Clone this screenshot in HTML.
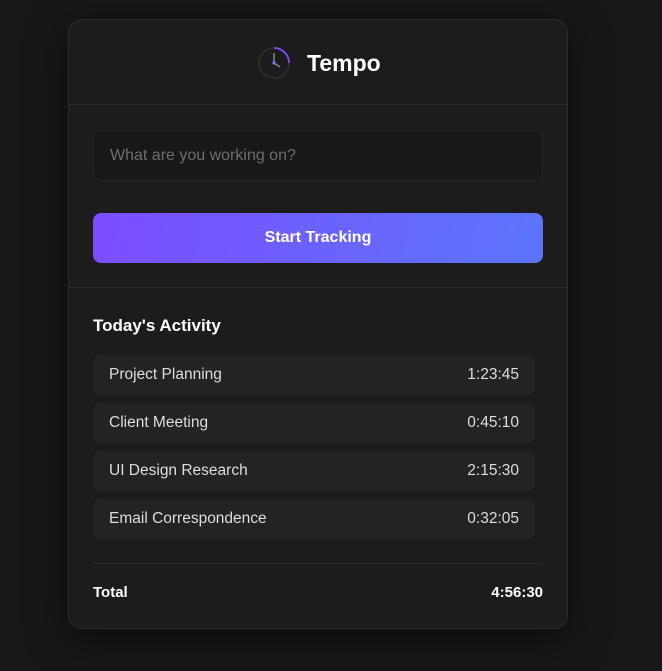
<!DOCTYPE html>
<html><head><style>
*{box-sizing:border-box;margin:0;padding:0}
body{width:662px;height:671px;background:#171717;font-family:"Liberation Sans",sans-serif;position:relative;overflow:hidden}
.card{position:absolute;left:68px;top:19px;width:500px;height:610px;background:#1c1c1c;border:1px solid #2c2c2c;border-radius:14px;box-shadow:0 10px 40px rgba(0,0,0,.5)}
.hdr{height:85px;border-bottom:1px solid #2a2a2a;position:relative}
.hdr svg{position:absolute;left:188px;top:26px}
.hdr .t{position:absolute;left:238px;top:30px;font-size:23px;font-weight:bold;color:#fff}
.inp{position:absolute;left:24px;top:110px;width:450px;height:51px;background:#181818;border:1px solid #252525;border-radius:8px;color:#6e6e6e;font-size:16px;padding:16px 16px}
.btn{position:absolute;left:24px;top:193px;width:450px;height:50px;border-radius:8px;background:linear-gradient(100deg,#7c4dff,#5b75fb);color:#fff;font-weight:bold;font-size:16px;text-align:center;line-height:50px}
.div{position:absolute;left:0;right:0;top:267px;border-top:1px solid #2a2a2a}
.h{position:absolute;left:24px;top:296px;color:#fff;font-size:17px;font-weight:bold}
.row{position:absolute;left:24px;width:442px;height:40px;background:#232323;border-radius:7px;color:#ddd;font-size:15.5px;line-height:40px;padding:0 16px;display:flex;justify-content:space-between}
.d2{position:absolute;left:24px;right:24px;top:543px;border-top:1px solid #2a2a2a}
.tot{position:absolute;left:24px;right:24px;top:564px;color:#fff;font-weight:bold;font-size:15px;display:flex;justify-content:space-between}
</style></head><body>
<div class="card">
<div class="hdr">
<svg width="34" height="34" viewBox="0 0 34 34"><circle cx="17" cy="17" r="15" fill="none" stroke="#333" stroke-width="1.3"/><path d="M17 2 A15 15 0 0 1 32 17" fill="none" stroke="#7c4dff" stroke-width="1.8"/><path d="M17 17 V7 M17 17 L23 21" stroke="#888" stroke-width="1.5" fill="none"/><circle cx="17" cy="17" r="1.6" fill="#7c6dff"/></svg>
<div class="t">Tempo</div></div>
<div class="inp">What are you working on?</div>
<div class="btn">Start Tracking</div>
<div class="div"></div>
<div class="h">Today's Activity</div>
<div class="row" style="top:335px"><span>Project Planning</span><span>1:23:45</span></div>
<div class="row" style="top:383px"><span>Client Meeting</span><span>0:45:10</span></div>
<div class="row" style="top:431px"><span>UI Design Research</span><span>2:15:30</span></div>
<div class="row" style="top:479px"><span>Email Correspondence</span><span>0:32:05</span></div>
<div class="d2"></div>
<div class="tot"><span>Total</span><span>4:56:30</span></div>
</div>
</body></html>
